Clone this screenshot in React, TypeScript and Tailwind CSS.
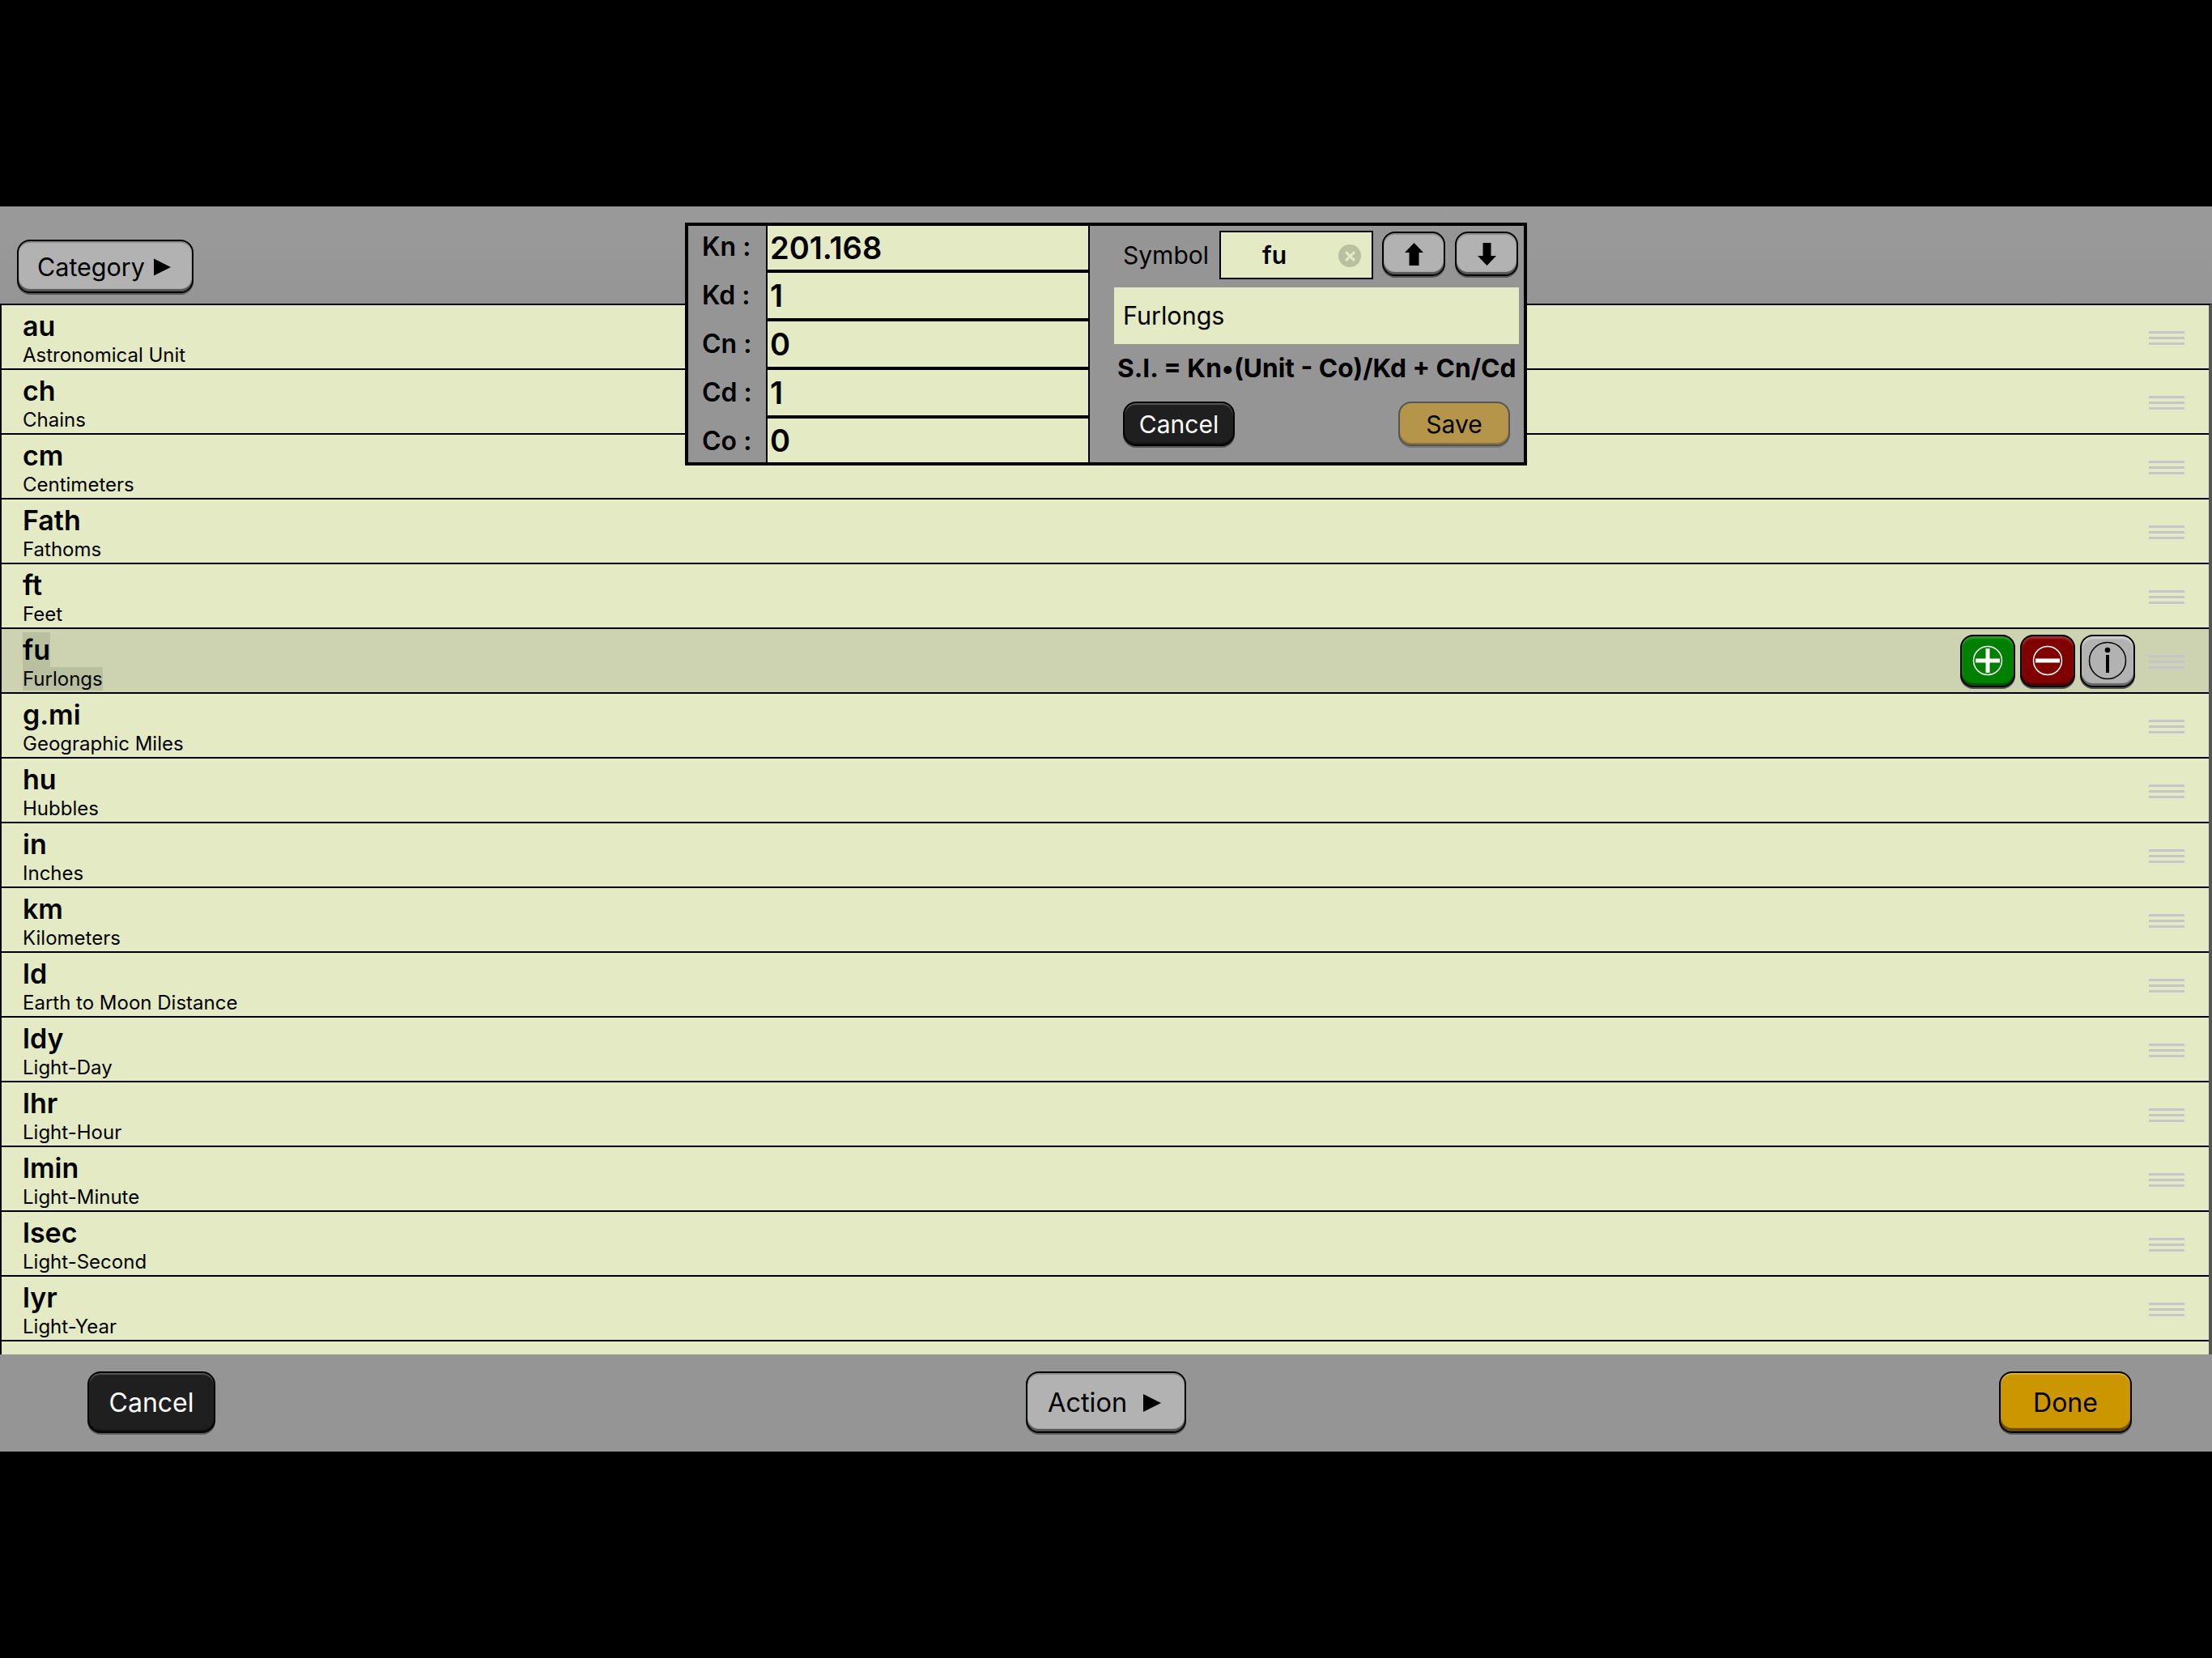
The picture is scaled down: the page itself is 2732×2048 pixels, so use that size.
import React from "react";

const rows: [string, string][] = [
  ["au", "Astronomical Unit"],
  ["ch", "Chains"],
  ["cm", "Centimeters"],
  ["Fath", "Fathoms"],
  ["ft", "Feet"],
  ["fu", "Furlongs"],
  ["g.mi", "Geographic Miles"],
  ["hu", "Hubbles"],
  ["in", "Inches"],
  ["km", "Kilometers"],
  ["ld", "Earth to Moon Distance"],
  ["ldy", "Light-Day"],
  ["lhr", "Light-Hour"],
  ["lmin", "Light-Minute"],
  ["lsec", "Light-Second"],
  ["lyr", "Light-Year"],
];

const fields: [string, string][] = [
  ["Kn :", "201.168"],
  ["Kd :", "1"],
  ["Cn :", "0"],
  ["Cd :", "1"],
  ["Co :", "0"],
];

function Tri({ className }: { className: string }) {
  return (
    <svg viewBox="0 0 22 22" className={className}>
      <polygon points="0,0 22,11 0,22" fill="#000" />
    </svg>
  );
}

function Handle() {
  return (
    <div className="flex w-[44px] flex-col gap-[4px]">
      <div className="h-[3px] bg-[#c6c6ca]" />
      <div className="h-[3px] bg-[#c6c6ca]" />
      <div className="h-[3px] bg-[#c6c6ca]" />
    </div>
  );
}

const bevelGray =
  "rounded-[16px] border-2 border-black bg-[#b2b2b2] shadow-[inset_0_2px_1px_#8a8a8a,inset_0_-3px_1px_#555,0_2px_0_#555]";
const bevelDark =
  "rounded-[16px] border-2 border-black bg-[#1f1f1f] shadow-[inset_0_2px_1px_#555,inset_0_-2px_1px_#111,0_2px_0_#555]";

function RowIcon({ kind }: { kind: "plus" | "minus" | "info" }) {
  const bg =
    kind === "plus"
      ? "bg-[#008000] shadow-[inset_0_3px_2px_#2a9a2a,inset_0_-3px_1px_#005000,0_2px_0_#555]"
      : kind === "minus"
        ? "bg-[#800000] shadow-[inset_0_3px_2px_#a03030,inset_0_-3px_1px_#500000,0_2px_0_#555]"
        : "bg-[#b2b2b2] shadow-[inset_0_3px_2px_#d0d0d0,inset_0_-3px_1px_#666,0_2px_0_#555]";
  return (
    <div className={`flex h-[65px] w-[68px] items-center justify-center rounded-[16px] border-2 border-black ${bg}`}>
      <svg viewBox="0 0 48 48" className="h-[48px] w-[48px]">
        {kind === "info" ? (
          <>
            <circle cx="24" cy="24" r="22.5" fill="none" stroke="#000" strokeWidth="1.5" />
            <circle cx="24" cy="11" r="3.3" fill="#000" />
            <rect x="22" y="17" width="4" height="22" fill="#000" />
          </>
        ) : (
          <>
            <circle cx="24" cy="24" r="17.5" fill="none" stroke="#fff" strokeWidth="1.5" />
            <rect x="9" y="21.5" width="30" height="5" fill="#fff" />
            {kind === "plus" && <rect x="21.5" y="9" width="5" height="30" fill="#fff" />}
          </>
        )}
      </svg>
    </div>
  );
}

function Row({ sym, name }: { sym: string; name: string }) {
  const sel = sym === "fu";
  return (
    <div className={`flex h-[80px] shrink-0 items-center border-b-[2px] border-black pl-[26px] pr-[30px] pt-[2px] ${sel ? "bg-[#cdd3b0]" : ""}`}>
      <div className="flex flex-col items-start">
        <span className={`h-[43px] text-[34px] font-semibold leading-[43px] ${sel ? "bg-[#b9c0a0]" : ""}`}>{sym}</span>
        <span className={`h-[29px] text-[24px] leading-[29px] ${sel ? "bg-[#b9c0a0]" : ""}`}>{name}</span>
      </div>
      <div className="ml-auto flex items-center">
        {sel && (
          <div className="mr-[17px] -mt-[2px] flex gap-[6px]">
            <RowIcon kind="plus" />
            <RowIcon kind="minus" />
            <RowIcon kind="info" />
          </div>
        )}
        <Handle />
      </div>
    </div>
  );
}

function Dialog() {
  return (
    <div className="absolute left-[846px] top-[275px] flex h-[300px] w-[1040px] border-[4px] border-black bg-[#959595] text-black">
      <div className="-mt-[4px] flex w-[96px] shrink-0 flex-col">
        {fields.map(([l]) => (
          <div key={l} className="flex h-[60px] shrink-0 items-center pl-[17px] text-[32px] font-semibold">
            {l}
          </div>
        ))}
      </div>
      <div className="flex w-[400px] shrink-0 flex-col border-x-2 border-black bg-[#e4ebc4]">
        {fields.map(([l, v], i) => (
          <div
            key={l}
            className={`flex shrink-0 items-center pl-[3px] text-[38px] font-semibold ${
              i === 0 ? "h-[58px] border-b-4 border-black" : i < 4 ? "h-[60px] border-b-4 border-black" : "h-[54px]"
            }`}
          >
            {v}
          </div>
        ))}
      </div>
      <div className="flex flex-1 flex-col pl-[30px] pr-[6px] pt-[6px]">
        <div className="flex h-[60px] items-start">
          <span className="flex h-[60px] w-[130px] items-center pl-[11px] text-[30px]">Symbol</span>
          <div className="relative flex h-[60px] w-[190px] items-center border-2 border-black bg-[#e4ebc4] pl-[51px] text-[30px] font-semibold">
            fu
            <span className="absolute right-[13px] top-[15px] flex h-[28px] w-[28px] items-center justify-center rounded-full bg-[#b9c0a0]">
              <svg viewBox="0 0 12 12" className="h-[13px] w-[13px]">
                <path d="M1 1 L11 11 M11 1 L1 11" stroke="#e4ebc4" strokeWidth="2.8" />
              </svg>
            </span>
          </div>
          <div className={`ml-[11px] mt-[1px] flex h-[55px] w-[78px] items-center justify-center pt-[1px] ${bevelGray}`}>
            <svg viewBox="0 0 23 28" className="h-[28px] w-[23px]">
              <polygon points="11.5,0 23,12 17.5,12 17.5,28 5.5,28 5.5,12 0,12" fill="#000" />
            </svg>
          </div>
          <div className={`ml-[12px] mt-[1px] flex h-[55px] w-[78px] items-center justify-center pt-[1px] ${bevelGray}`}>
            <svg viewBox="0 0 23 28" className="h-[28px] w-[23px]">
              <polygon points="11.5,28 23,16 16.5,16 16.5,0 6.5,0 6.5,16 0,16" fill="#000" />
            </svg>
          </div>
        </div>
        <div className="mt-[10px] flex h-[70px] w-[500px] items-center bg-[#e4ebc4] pl-[11px] text-[30.5px]">Furlongs</div>
        <div className="mt-[14px] h-[32px] whitespace-nowrap pl-[4px] text-[31.7px] font-bold leading-[32px]">
          S.I. = Kn•(Unit - Co)/Kd + Cn/Cd
        </div>
        <div className="mt-[25px] flex pl-[11px]">
          <div className={`flex h-[55px] w-[138px] items-center justify-center pt-[2px] text-[30px] text-white ${bevelDark}`}>Cancel</div>
          <div className="ml-[202px] flex h-[55px] w-[138px] items-center justify-center rounded-[16px] border-2 border-[#555] bg-[#b4954a] pt-[2px] text-[30px] shadow-[inset_0_-2px_1px_#8a7238,0_2px_0_#777]">
            Save
          </div>
        </div>
      </div>
    </div>
  );
}

export default function App() {
  return (
    <div className="relative flex h-[2048px] w-[2732px] flex-col bg-black font-['Inter',sans-serif] text-black">
      <div className="h-[255px] shrink-0" />
      <div className="flex h-[120px] shrink-0 items-start bg-gradient-to-b from-[#9a9a9a] to-[#959595] pl-[21px] pt-[41px]">
        <div className={`flex h-[66px] w-[218px] items-center gap-[11px] pl-[23px] pt-[2px] text-[30.5px] ${bevelGray}`}>
          Category
          <Tri className="h-[22px] w-[21px]" />
        </div>
      </div>
      <div className="flex h-[1298px] shrink-0 flex-col overflow-hidden border-l-2 border-r-4 border-t-2 border-black border-r-[#555] bg-[#e4ebc4]">
        {rows.map(([s, n]) => (
          <Row key={s} sym={s} name={n} />
        ))}
      </div>
      <div className="flex h-[120px] shrink-0 items-start bg-[#959595] pt-[21px]">
        <div className={`ml-[108px] flex h-[76px] w-[158px] items-center justify-center pt-[2px] text-[32px] text-white ${bevelDark}`}>Cancel</div>
        <div className={`ml-[1001px] flex h-[76px] w-[198px] items-center gap-[20px] pl-[25px] pt-[2px] text-[32.5px] ${bevelGray}`}>
          Action
          <Tri className="h-[22px] w-[22px]" />
        </div>
        <div className="ml-[1004px] flex h-[76px] w-[164px] items-center justify-center rounded-[16px] border-2 border-black bg-[#cc9600] pt-[2px] text-[32px] shadow-[inset_0_2px_1px_#e0b040,inset_0_-4px_1px_#6a4e00,0_2px_0_#555]">
          Done
        </div>
      </div>
      <div className="flex-1" />
      <Dialog />
    </div>
  );
}
